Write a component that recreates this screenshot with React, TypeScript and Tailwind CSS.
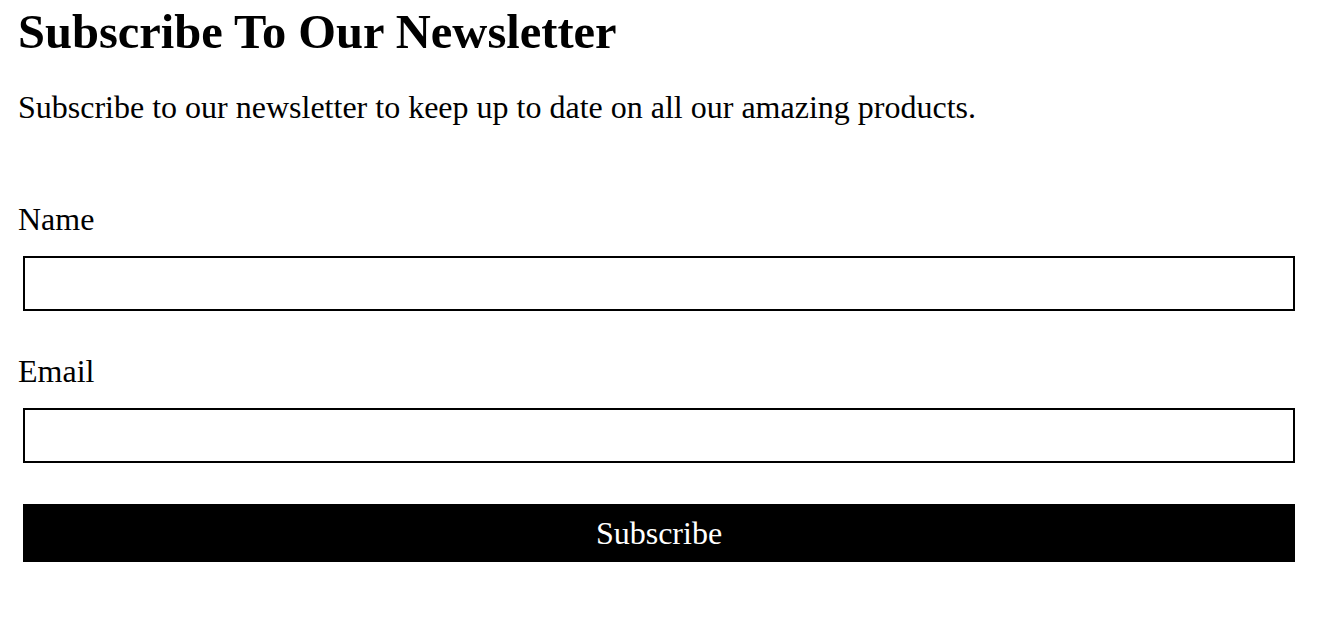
import React from "react";

export default function App() {
  return (
    <div className="bg-white text-black px-[18px]">
      <div className="font-['Liberation_Serif',serif]">
        <h1 className="text-[48.5px] font-bold leading-[1.15] pt-[4px]">Subscribe To Our Newsletter</h1>
        <p className="text-[32px] leading-[1.2] mt-[28px]">
          Subscribe to our newsletter to keep up to date on all our amazing products.
        </p>
        <form className="mt-[74px] flex flex-col" onSubmit={(e) => e.preventDefault()}>
          <label className="text-[32px] leading-[1.2]">Name</label>
          <input className="mt-[17px] ml-[5px] mr-[19px] h-[55px] border-2 border-black outline-none" />
          <label className="text-[32px] leading-[1.2] mt-[41px]">Email</label>
          <input className="mt-[18px] ml-[5px] mr-[19px] h-[55px] border-2 border-black outline-none" />
          <button className="mt-[41px] ml-[5px] mr-[19px] h-[58px] bg-black text-white text-[32px]">
            Subscribe
          </button>
        </form>
      </div>
    </div>
  );
}
